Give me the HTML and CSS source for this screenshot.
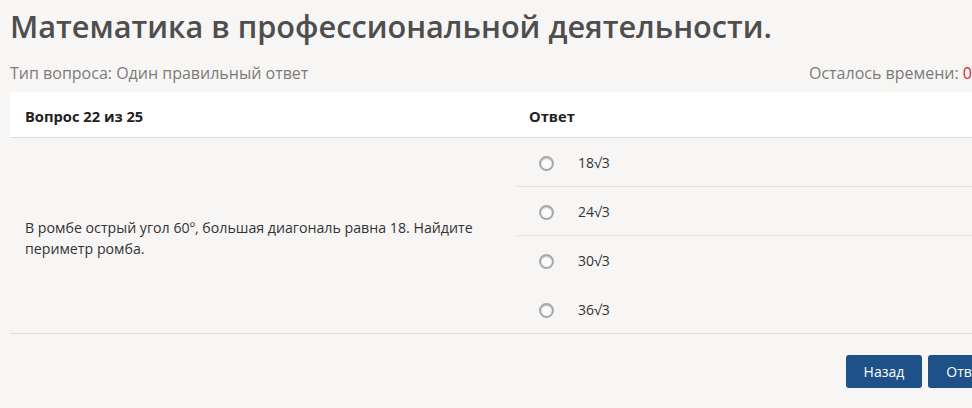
FILE: index.html
```html
<!DOCTYPE html>
<html lang="ru">
<head>
<meta charset="utf-8">
<title>Тест</title>
<link rel="stylesheet" href="styles.css">
</head>
<body>
<div class="page">
  <h1 class="title">Математика в профессиональной деятельности.</h1>
  <div class="meta">
    <span class="type">Тип вопроса: Один правильный ответ</span>
    <span class="timer">Осталось времени: <span class="time">0:14:32</span></span>
  </div>
  <div class="quiz">
    <div class="head head-q">Вопрос 22 из 25</div>
    <div class="head head-a">Ответ</div>
    <div class="question">В ромбе острый угол 60º, большая диагональ равна 18. Найдите периметр ромба.</div>
    <div class="answers">
      <label class="answer ruled"><span class="radio"></span><span class="value">18√3</span></label>
      <label class="answer ruled"><span class="radio"></span><span class="value">24√3</span></label>
      <label class="answer"><span class="radio"></span><span class="value">30√3</span></label>
      <label class="answer"><span class="radio"></span><span class="value">36√3</span></label>
    </div>
  </div>
  <div class="actions">
    <button class="btn">Назад</button>
    <button class="btn">Ответить</button>
  </div>
</div>
</body>
</html>
```
FILE: styles.css
```css
html, body {
  margin: 0;
  padding: 0;
  background: #f7f6f5;
  overflow: hidden;
}

body {
  font-family: "Open Sans", "Noto Sans", sans-serif;
  color: #333;
}

.page {
  width: 1018px;
  padding-left: 10px;
}

.title {
  margin: 6px 0 0;
  font-size: 30.7px;
  line-height: 40px;
  font-weight: 600;
  color: #4e4e4e;
  white-space: nowrap;
}

.meta {
  display: flex;
  justify-content: space-between;
  margin-top: 15px;
  font-size: 16px;
  line-height: 24px;
  color: #7b7b7b;
}

.timer {
  margin-right: 11px;
}

.time {
  color: #d0282a;
}

.quiz {
  display: grid;
  grid-template-columns: 507px 1fr;
  margin-top: 7px;
  border-bottom: 1px solid #dedede;
}

.head {
  background: #fff;
  border-bottom: 1px solid #dedede;
  padding: 14px 0 10px;
  font-size: 14.7px;
  line-height: 21px;
  font-weight: 700;
  color: #222;
}

.head-q {
  padding-left: 15px;
}

.head-a {
  padding-left: 12px;
}

.question {
  display: flex;
  align-items: center;
  padding: 5px 30px 0 15px;
  font-size: 14.2px;
  line-height: 21px;
  color: #333;
}

.answers {
  display: flex;
  flex-direction: column;
}

.answer {
  display: flex;
  align-items: center;
  height: 48px;
  padding-left: 22px;
  border-bottom: 1px solid transparent;
  font-size: 14px;
  color: #333;
}

.answer.ruled {
  border-bottom-color: #e2e2e2;
}

.answer:last-child {
  border-bottom: 0;
}

.radio {
  flex: none;
  width: 11px;
  height: 11px;
  margin-top: 3px;
  border: 2px solid #a8a8a8;
  border-radius: 50%;
  background: radial-gradient(circle, #fbfbfb 45%, #e8e8e8 100%);
  box-shadow: inset 0 1px 1px rgba(0, 0, 0, 0.18);
}

.value {
  margin-left: 24px;
}

.actions {
  display: flex;
  justify-content: flex-end;
  gap: 6px;
  margin-top: 21px;
}

.btn {
  height: 33px;
  padding: 0 18px;
  border: 0;
  border-radius: 3px;
  background: #1d5187;
  color: #fff;
  font-family: "Open Sans", "Noto Sans", sans-serif;
  font-size: 14px;
}
```
